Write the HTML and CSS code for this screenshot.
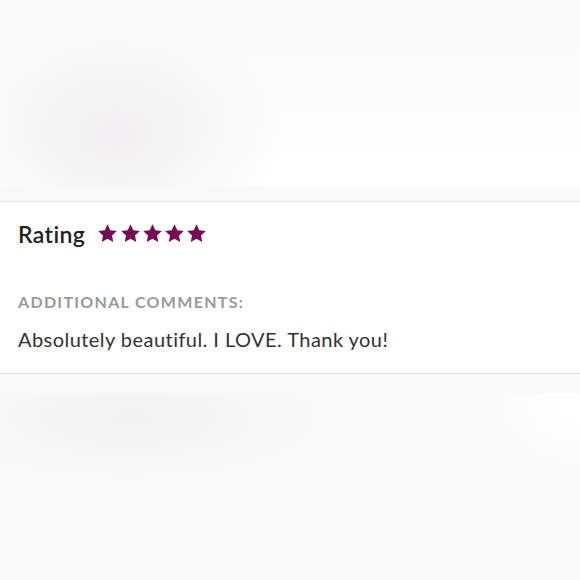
FILE: index.html
```html
<!DOCTYPE html>
<html>
<head>
<meta charset="utf-8">
<link rel="stylesheet" href="styles.css">
</head>
<body>
<div class="page">
  <div class="blur-top"></div>
  <div class="band"></div>
  <section class="card">
    <div class="rating-row">
      <span class="rating-label">Rating</span>
      <span class="stars">
        <svg class="star" viewBox="1.5 1.5 21 20"><path d="M12 1.8l3.1 6.6 7.2.9-5.3 5 1.4 7.1L12 17.9l-6.4 3.5 1.4-7.1-5.3-5 7.2-.9z"/></svg>
        <svg class="star" viewBox="1.5 1.5 21 20"><path d="M12 1.8l3.1 6.6 7.2.9-5.3 5 1.4 7.1L12 17.9l-6.4 3.5 1.4-7.1-5.3-5 7.2-.9z"/></svg>
        <svg class="star" viewBox="1.5 1.5 21 20"><path d="M12 1.8l3.1 6.6 7.2.9-5.3 5 1.4 7.1L12 17.9l-6.4 3.5 1.4-7.1-5.3-5 7.2-.9z"/></svg>
        <svg class="star" viewBox="1.5 1.5 21 20"><path d="M12 1.8l3.1 6.6 7.2.9-5.3 5 1.4 7.1L12 17.9l-6.4 3.5 1.4-7.1-5.3-5 7.2-.9z"/></svg>
        <svg class="star" viewBox="1.5 1.5 21 20"><path d="M12 1.8l3.1 6.6 7.2.9-5.3 5 1.4 7.1L12 17.9l-6.4 3.5 1.4-7.1-5.3-5 7.2-.9z"/></svg>
      </span>
    </div>
    <div class="comments-label">ADDITIONAL COMMENTS:</div>
    <div class="comments-text">Absolutely beautiful. I LOVE. Thank you!</div>
  </section>
  <div class="band band-bottom"></div>
  <div class="blur-bottom"></div>
</div>
</body>
</html>
```
FILE: styles.css
```css
html, body {
  margin: 0;
  padding: 0;
  background: #f9f9f9;
}
.page {
  width: 580px;
  height: 580px;
  overflow: hidden;
  display: flex;
  flex-direction: column;
  font-family: "Lato", "Liberation Sans", sans-serif;
}
.blur-top {
  height: 187px;
  flex: none;
  background:
    radial-gradient(ellipse 170px 120px at 115px 135px, #f1eff1 0%, rgba(244,242,243,0.6) 50%, rgba(250,250,250,0) 100%),
    linear-gradient(to bottom, #fafafa 0%, #fcfcfc 50%, #ffffff 100%);
}
.band {
  height: 14px;
  flex: none;
  background: #f9f9f9;
}
.card {
  flex: none;
  height: 173px;
  box-sizing: border-box;
  background: #ffffff;
  border-top: 1px solid #dedede;
  border-bottom: 1px solid #dedede;
  padding: 18px 18px 0 18px;
}
.rating-row {
  display: flex;
  align-items: center;
  gap: 13px;
  height: 28px;
}
.rating-label {
  font-size: 23px;
  font-weight: 600;
  color: #222222;
  letter-spacing: 0.4px;
}
.stars {
  display: flex;
  gap: 3.3px;
  margin-top: -2px;
}
.star {
  width: 19px;
  height: 18px;
  fill: #7a0a57;
}
.comments-label {
  margin-top: 44px;
  font-size: 16px;
  font-weight: 700;
  color: #9b9b99;
  letter-spacing: 1.3px;
}
.comments-text {
  margin-top: 16px;
  font-size: 20px;
  color: #333333;
  letter-spacing: 0.45px;
}
.band-bottom {
  height: 19px;
  background: #f9f9f9;
}
.blur-bottom {
  flex: 1;
  background:
    radial-gradient(ellipse 220px 70px at 130px 25px, #f2f2f2 0%, rgba(246,246,246,0.5) 60%, rgba(249,249,249,0) 100%),
    radial-gradient(ellipse 130px 100px at 580px 10px, #ffffff 0%, rgba(255,255,255,0) 100%),
    #f9f9f9;
}
```
